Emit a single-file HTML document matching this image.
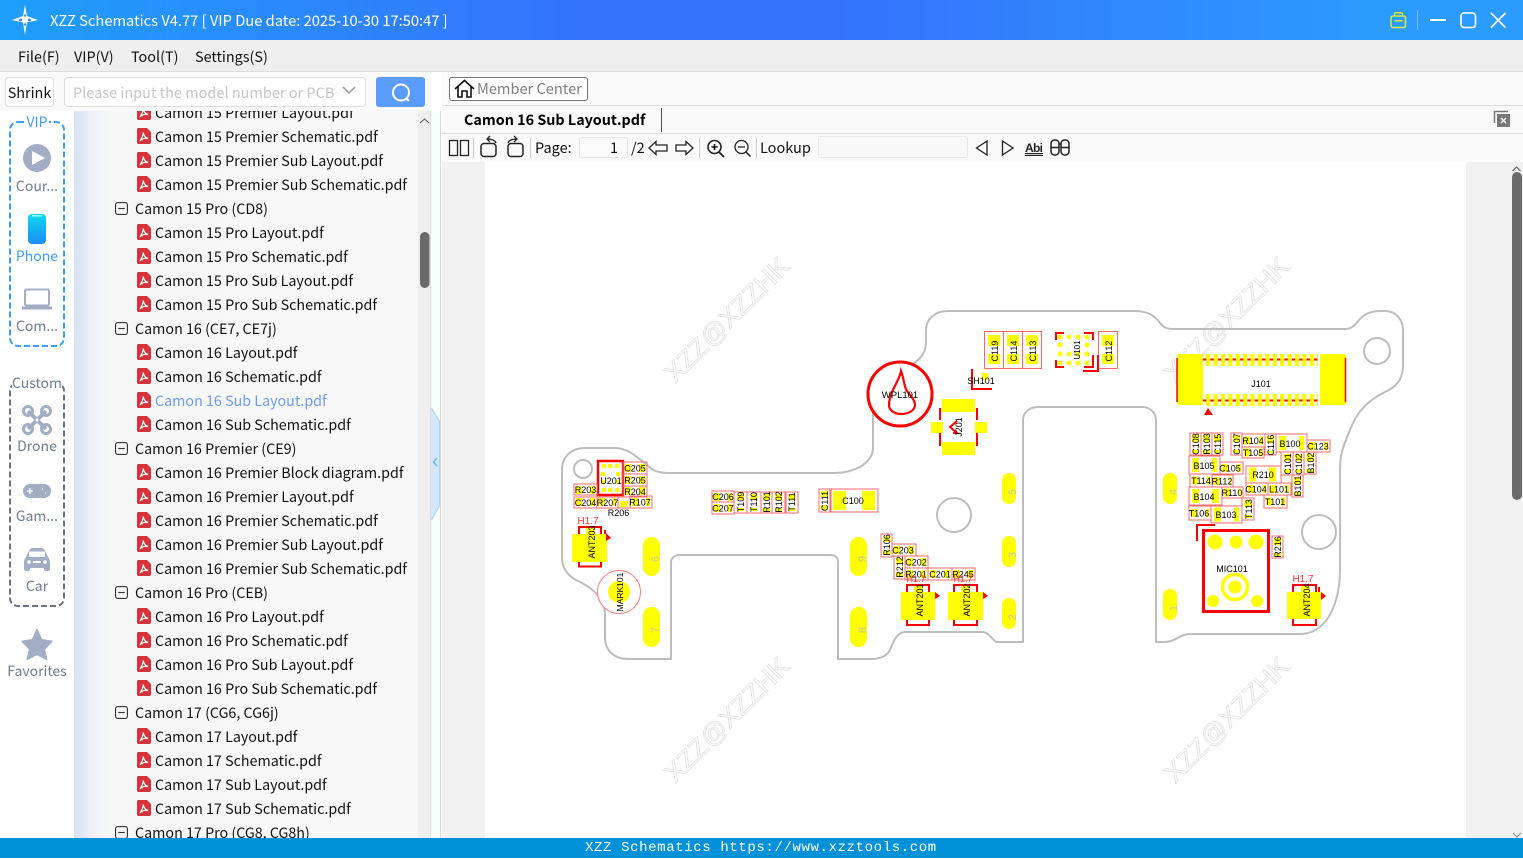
<!DOCTYPE html>
<html><head><meta charset="utf-8"><title>XZZ Schematics</title>
<style>
*{box-sizing:border-box}
html,body{margin:0;padding:0;width:1523px;height:858px;overflow:hidden;background:#fff;font-family:"Liberation Sans","Noto Sans CJK SC",sans-serif}
.n{font-family:"Noto Sans CJK SC","Liberation Sans",sans-serif}
.a{position:absolute}
#title{left:0;top:0;width:1523px;height:40px;background:linear-gradient(90deg,#1f9ffb 0%,#3573fb 38%,#3573fb 55%,#2b9bff 90%)}
#ttext{left:50px;top:10px;color:#fff;font-size:14.7px;line-height:22px;white-space:nowrap}
#menu{left:0;top:40px;width:1523px;height:32px;background:#efefef;border-bottom:1px solid #dcdcdc;font-size:14.4px;line-height:33px;color:#111}
#menu span{position:absolute;top:0}
#row{left:0;top:72px;width:431px;height:39px;background:#fafafa}
#shrink{left:5px;top:77px;width:49px;height:30px;background:#fff;border:1px solid #ddd;border-radius:4px;font-size:14.4px;line-height:30px;text-align:center;color:#111}
#inp{left:64px;top:77px;width:302px;height:30px;background:#fff;border:1px solid #ddd;border-radius:4px;color:#c4c6cc;font-size:14.5px;line-height:29px;padding-left:8px;white-space:nowrap}
#sb{left:376px;top:77px;width:49px;height:30px;background:#5a9cff;border-radius:3px}
#side{left:0;top:111px;width:74px;height:727px;background:#fff}
#tree{left:74px;top:111px;width:344px;height:727px;overflow:hidden;background:linear-gradient(90deg,#d9e3f3 0,#f2f4f7 24px,#f7f7f7 40px,#f8f8f8 100%)}
#sc1{left:418px;top:111px;width:12px;height:727px;background:#efefef}
.r{position:absolute;white-space:nowrap;font-size:14.3px;line-height:24px;height:24px;color:#111;left:81px;margin-top:1px}
.f{left:61px}
.r svg{position:absolute;left:-18px;top:3px}
.f svg{left:-20px;top:5px;width:13px;height:13px}
.s{position:absolute;left:0;width:74px;text-align:center;font-size:14px;line-height:20px;color:#6f7d92;white-space:nowrap}
#rtop{left:442px;top:72px;width:1081px;height:90px;background:#fafafa}
#main{left:442px;top:162px;width:1068px;height:676px;background:#f1f1f1}
#page{left:485px;top:162px;width:981px;height:676px;background:#fff}
#sc2{left:1510px;top:162px;width:13px;height:676px;background:#f1f1f1}
.hl{left:442px;width:1081px;height:1px;background:#dcdcdc}
.t{position:absolute;font-size:14.5px;line-height:20px;color:#111;white-space:nowrap}
.sep{position:absolute;top:138px;width:1px;height:20px;background:#ccc}
#status{left:0;top:838px;width:1523px;height:20px;background:#0091d8;color:#fff;font-family:"Liberation Mono",monospace;font-size:14px;line-height:21px}
#status span{position:absolute;left:585px;letter-spacing:.62px;white-space:nowrap}
svg text{font-family:"Liberation Sans",sans-serif}
.b{fill:none;stroke:#f86a6a;stroke-width:1}
.y{fill:none;stroke:#ff0}
.l{font-size:9px;text-anchor:middle;fill:#000}
.g{font-size:11px;text-anchor:middle;fill:#c8c8a0}
.p{fill:#ff0}
.o{fill:none;stroke:#bdbdbd;stroke-width:2}
.rd{fill:none;stroke:#f00;stroke-width:2}
.w{font-size:26.5px;fill:#fff;stroke:#e6e6e6;stroke-width:1;text-anchor:middle}
</style></head><body>
<svg width="0" height="0" style="position:absolute"><defs>
<symbol id="pdf" viewBox="0 0 14 16"><path d="M1.5 0H10L14 4V14.500A1.500 1.500 0 0 1 12.500 16H1.500A1.500 1.500 0 0 1 0 14.500V1.500A1.500 1.500 0 0 1 1.500 0Z" fill="#d5343f"/><path d="M6.200 4.500C7 8 8 9.500 11 10.500C8 9.800 5.500 10.500 3 12.800C5 10.500 6 8 6.200 4.500Z" fill="none" stroke="#fff" stroke-width="1.200"/></symbol>
<symbol id="min" viewBox="0 0 14 14"><rect x=".6" y=".6" width="12.800" height="12.800" rx="2.500" fill="none" stroke="#333" stroke-width="1.200"/><path d="M3.500 7H10.500" stroke="#333" stroke-width="1.200"/></symbol>
</defs></svg>

<div id="title" class="a"></div>
<svg class="a" style="left:0;top:0" width="1523" height="40">
<path d="M25 5L27 16 38 20 27 22.500 25 35 23 22.500 12 20 23 16Z" fill="#fff"/>
<circle cx="20.500" cy="20" r="1.500" fill="#3a8cf5"/><circle cx="29.500" cy="20" r="1.500" fill="#3a8cf5"/><circle cx="25" cy="15.500" r="1.200" fill="#3a8cf5"/><circle cx="25" cy="24.500" r="1.200" fill="#3a8cf5"/>
<rect x="1391" y="16" width="14.500" height="11.500" rx="2" fill="none" stroke="#d5e83c" stroke-width="1.500"/><path d="M1394.500 16V14A1.500 1.500 0 0 1 1396 12.800H1401A1.500 1.500 0 0 1 1402.500 14V16M1394.500 20.800H1402.500" fill="none" stroke="#d5e83c" stroke-width="1.500"/>
<path d="M1417.500 10V30" stroke="#7fc0ff" stroke-width="1"/>
<path d="M1430 20H1446" stroke="#fff" stroke-width="2"/>
<rect x="1461" y="13" width="14.500" height="14.500" rx="3" fill="none" stroke="#fff" stroke-width="1.600"/>
<path d="M1491 13L1505.500 27.500M1505.500 13L1491 27.500" stroke="#fff" stroke-width="1.600"/>
</svg>
<div id="ttext" class="a n">XZZ Schematics V4.77 [ VIP Due date: 2025-10-30 17:50:47 ]</div>

<div id="menu" class="a n"><span style="left:18px">File(F)</span><span style="left:74px">VIP(V)</span><span style="left:131px">Tool(T)</span><span style="left:195px">Settings(S)</span></div>

<div id="row" class="a"></div>
<div id="shrink" class="a n">Shrink</div>
<div id="inp" class="a n">Please input the model number or PCB</div>
<svg class="a" style="left:340px;top:84px" width="18" height="14"><path d="M3 3L9 9 15 3" fill="none" stroke="#999" stroke-width="1.500"/></svg>
<div id="sb" class="a"><svg width="49" height="30"><circle cx="25" cy="15.500" r="8" fill="none" stroke="#fff" stroke-width="2"/><path d="M30.500 21.500L33 24" stroke="#fff" stroke-width="2"/></svg></div>

<div id="side" class="a"></div>
<svg class="a" style="left:0;top:111px" width="74" height="600">
<rect x="10" y="11" width="54" height="224" rx="8" fill="none" stroke="#3d9dfb" stroke-width="2" stroke-dasharray="6 3"/>
<rect x="26" y="4" width="23" height="14" fill="#fff"/>
<circle cx="37" cy="47" r="14" fill="#a3aec4"/><path d="M32 40L45 47 32 54Z" fill="#fff"/>
<defs><linearGradient id="ph" x1="0" y1="0" x2="0" y2="1"><stop offset="0" stop-color="#10d8ee"/><stop offset="1" stop-color="#1a8cf5"/></linearGradient></defs>
<rect x="28" y="103" width="18" height="30" rx="4" fill="url(#ph)"/><rect x="32" y="104" width="10" height="1.500" fill="#9ff"/>
<rect x="25" y="178.500" width="24" height="16" rx="1.500" fill="none" stroke="#a3aec4" stroke-width="2"/><path d="M22 197H52" stroke="#a3aec4" stroke-width="3"/>
<rect x="10" y="272" width="54" height="223" rx="8" fill="none" stroke="#6c7386" stroke-width="2" stroke-dasharray="6 3"/>
<rect x="12" y="264" width="50" height="14" fill="#fff"/>
<g fill="none" stroke="#a3aec4"><path d="M28 300L46 318M46 300L28 318" stroke-width="4"/><circle cx="28" cy="300" r="4.500" stroke-width="3"/><circle cx="46" cy="300" r="4.500" stroke-width="3"/><circle cx="28" cy="318" r="4.500" stroke-width="3"/><circle cx="46" cy="318" r="4.500" stroke-width="3"/></g><circle cx="37" cy="309" r="2" fill="#fff" stroke="#a3aec4"/>
<rect x="23" y="373" width="28" height="14" rx="7" fill="#a3aec4"/><path d="M27 380H33M30 377V383M42 378H43M45 382H46" stroke="#fff" stroke-width="1.300"/>
<path d="M24 452C24 449 25 447 26 446L29 440C30 438 31 437 33 437H41C43 437 44 438 45 440L48 446C49 447 50 449 50 452V458C50 459 49 460 48 460H46C45 460 44 459 44 458V457H30V458C30 459 29 460 28 460H26C25 460 24 459 24 458Z" fill="#a3aec4"/><rect x="29" y="440.500" width="16" height="5.500" rx="1" fill="#fff"/><circle cx="29" cy="451" r="1.800" fill="#fff"/><circle cx="45" cy="451" r="1.800" fill="#fff"/><rect x="33" y="450" width="8" height="2" fill="#fff"/>
<path d="M37 519L41.500 529 51.500 530.500 44 538 46.500 548 37 543 27.500 548 30 538 22.500 530.500 32.500 529Z" fill="#a3aec4" stroke="#a3aec4" stroke-linejoin="round" stroke-width="2"/>
</svg>
<div class="s n" style="top:112px;color:#3d9dfb">VIP</div>
<div class="s n" style="top:176px">Cour...</div>
<div class="s n" style="top:246px;color:#3d9dfb">Phone</div>
<div class="s n" style="top:316px">Com...</div>
<div class="s n" style="top:373px">Custom</div>
<div class="s n" style="top:436px">Drone</div>
<div class="s n" style="top:506px">Gam...</div>
<div class="s n" style="top:576px">Car</div>
<div class="s n" style="top:661px">Favorites</div>

<div id="tree" class="a n">
<div class="r" style="top:-11px"><svg width="14" height="16"><use href="#pdf"/></svg>Camon 15 Premier Layout.pdf</div>
<div class="r" style="top:13px"><svg width="14" height="16"><use href="#pdf"/></svg>Camon 15 Premier Schematic.pdf</div>
<div class="r" style="top:37px"><svg width="14" height="16"><use href="#pdf"/></svg>Camon 15 Premier Sub Layout.pdf</div>
<div class="r" style="top:61px"><svg width="14" height="16"><use href="#pdf"/></svg>Camon 15 Premier Sub Schematic.pdf</div>
<div class="r f" style="top:85px"><svg width="14" height="14"><use href="#min"/></svg>Camon 15 Pro (CD8)</div>
<div class="r" style="top:109px"><svg width="14" height="16"><use href="#pdf"/></svg>Camon 15 Pro Layout.pdf</div>
<div class="r" style="top:133px"><svg width="14" height="16"><use href="#pdf"/></svg>Camon 15 Pro Schematic.pdf</div>
<div class="r" style="top:157px"><svg width="14" height="16"><use href="#pdf"/></svg>Camon 15 Pro Sub Layout.pdf</div>
<div class="r" style="top:181px"><svg width="14" height="16"><use href="#pdf"/></svg>Camon 15 Pro Sub Schematic.pdf</div>
<div class="r f" style="top:205px"><svg width="14" height="14"><use href="#min"/></svg>Camon 16 (CE7, CE7j)</div>
<div class="r" style="top:229px"><svg width="14" height="16"><use href="#pdf"/></svg>Camon 16 Layout.pdf</div>
<div class="r" style="top:253px"><svg width="14" height="16"><use href="#pdf"/></svg>Camon 16 Schematic.pdf</div>
<div class="r" style="top:277px;color:#6f9cf7"><svg width="14" height="16"><use href="#pdf"/></svg>Camon 16 Sub Layout.pdf</div>
<div class="r" style="top:301px"><svg width="14" height="16"><use href="#pdf"/></svg>Camon 16 Sub Schematic.pdf</div>
<div class="r f" style="top:325px"><svg width="14" height="14"><use href="#min"/></svg>Camon 16 Premier (CE9)</div>
<div class="r" style="top:349px"><svg width="14" height="16"><use href="#pdf"/></svg>Camon 16 Premier Block diagram.pdf</div>
<div class="r" style="top:373px"><svg width="14" height="16"><use href="#pdf"/></svg>Camon 16 Premier Layout.pdf</div>
<div class="r" style="top:397px"><svg width="14" height="16"><use href="#pdf"/></svg>Camon 16 Premier Schematic.pdf</div>
<div class="r" style="top:421px"><svg width="14" height="16"><use href="#pdf"/></svg>Camon 16 Premier Sub Layout.pdf</div>
<div class="r" style="top:445px"><svg width="14" height="16"><use href="#pdf"/></svg>Camon 16 Premier Sub Schematic.pdf</div>
<div class="r f" style="top:469px"><svg width="14" height="14"><use href="#min"/></svg>Camon 16 Pro (CEB)</div>
<div class="r" style="top:493px"><svg width="14" height="16"><use href="#pdf"/></svg>Camon 16 Pro Layout.pdf</div>
<div class="r" style="top:517px"><svg width="14" height="16"><use href="#pdf"/></svg>Camon 16 Pro Schematic.pdf</div>
<div class="r" style="top:541px"><svg width="14" height="16"><use href="#pdf"/></svg>Camon 16 Pro Sub Layout.pdf</div>
<div class="r" style="top:565px"><svg width="14" height="16"><use href="#pdf"/></svg>Camon 16 Pro Sub Schematic.pdf</div>
<div class="r f" style="top:589px"><svg width="14" height="14"><use href="#min"/></svg>Camon 17 (CG6, CG6j)</div>
<div class="r" style="top:613px"><svg width="14" height="16"><use href="#pdf"/></svg>Camon 17 Layout.pdf</div>
<div class="r" style="top:637px"><svg width="14" height="16"><use href="#pdf"/></svg>Camon 17 Schematic.pdf</div>
<div class="r" style="top:661px"><svg width="14" height="16"><use href="#pdf"/></svg>Camon 17 Sub Layout.pdf</div>
<div class="r" style="top:685px"><svg width="14" height="16"><use href="#pdf"/></svg>Camon 17 Sub Schematic.pdf</div>
<div class="r f" style="top:709px"><svg width="14" height="14"><use href="#min"/></svg>Camon 17 Pro (CG8, CG8h)</div>
</div>
<div id="sc1" class="a"></div>
<svg class="a" style="left:418px;top:111px" width="24" height="727">
<path d="M2 12L6.500 8 11 12" fill="none" stroke="#555"/>
<rect x="2" y="121" width="9.500" height="56" rx="4.700" fill="#6a6a6a"/>
<rect x="12" y="0" width="1" height="727" fill="#dcdcdc"/><rect x="13" y="0" width="9" height="727" fill="#fbfffb"/><rect x="22" y="0" width="1" height="727" fill="#dcdcdc"/>
<path d="M13 297L22 310V395L13 409Z" fill="#d3e7fc"/><path d="M13.500 297L21.500 310V395L13.500 409" fill="none" stroke="#a8d3fb"/>
<path d="M19 347L15.500 351 19 355" fill="none" stroke="#63b0f5" stroke-width="1.300"/>
</svg>

<div id="rtop" class="a"></div>
<div class="a hl" style="top:105px"></div>
<div class="a hl" style="top:133px"></div>
<div id="main" class="a"></div>
<div id="page" class="a"></div>
<div id="sc2" class="a"></div>

<div class="a n" style="left:449px;top:77px;width:139px;height:24px;border:1px solid #777;border-radius:3px;background:#fff"></div>
<svg class="a" style="left:449px;top:77px" width="30" height="24"><path d="M6 12L15.500 3.500 25 12M9 10V20H13V14H18V20H22V10" fill="none" stroke="#111" stroke-width="1.600"/></svg>
<div class="t n" style="left:477px;top:79px;color:#808080;font-size:14.6px">Member Center</div>
<div class="t n" style="left:464px;top:110px;font-weight:700;color:#000;font-size:14.35px">Camon 16 Sub Layout.pdf</div>
<div class="a" style="left:661px;top:108px;width:1px;height:24px;background:#555"></div>
<svg class="a" style="left:1493px;top:109px" width="20" height="20"><path d="M1.500 14V2.500H15" fill="none" stroke="#777" stroke-width="1.500"/><rect x="4" y="5" width="13" height="13" fill="#777"/><path d="M8 9L13 14M13 9L8 14" stroke="#fff" stroke-width="1.300"/></svg>

<svg class="a" style="left:442px;top:134px" width="640" height="28">
<g fill="none" stroke="#222" stroke-width="1.300">
<rect x="7.500" y="6.500" width="8" height="15"/><rect x="18.500" y="6.500" width="8" height="15"/>
<rect x="39" y="9.500" width="15" height="13" rx="3" stroke-width="1.500"/><path d="M54 9C53 6 50 5 45 5M48 2L45 5 48 8"/>
<rect x="66" y="9.500" width="15" height="13" rx="3" stroke-width="1.500"/><path d="M66 9C67 6 70 5 75 5M72 2L75 5 72 8"/>
<path d="M207 14L214 7.500V11H225V17H214V20.500Z"/><path d="M251 14L244 7.500V11H234V17H244V20.500Z"/>
<circle cx="272.500" cy="13" r="6.500" stroke-width="1.600"/><path d="M277 18L282 23" stroke-width="1.800"/>
<circle cx="299.500" cy="13" r="6.500"/><path d="M304 18L308.500 22.500" stroke-width="1.500"/><path d="M296 13H303"/>
<path d="M545 7L534.500 14 545 21Z"/><path d="M560.500 7L571 14 560.500 21Z"/>
</g>
<path d="M272.500 10V16M269.500 13H275.500" stroke="#111" stroke-width="1.600"/>
<g fill="none" stroke="#222" stroke-width="1.500"><rect x="609" y="6" width="8" height="15" rx="3.500"/><rect x="619" y="6" width="8" height="15" rx="3.500"/><path d="M609 13.500H617M619 13.500H627M617 10H619"/></g>
<text x="583" y="18" style="font-size:12px;text-decoration:underline;font-weight:700" fill="#222" textLength="18">Abi</text>
<path d="M583 21.500H601" stroke="#222"/>
</svg>
<div class="sep" style="left:473px"></div><div class="sep" style="left:530px"></div><div class="sep" style="left:699px"></div><div class="sep" style="left:756px"></div>
<div class="t n" style="left:535px;top:138px">Page:</div>
<div class="a n" style="left:579px;top:137px;width:49px;height:21px;background:#fbfbfb;border:1px solid #e6e6e6;border-radius:3px;font-size:14.5px;line-height:20px;text-align:right;padding-right:9px;color:#111">1</div>
<div class="t n" style="left:631px;top:138px">/2</div>
<div class="t n" style="left:760px;top:138px">Lookup</div>
<div class="a" style="left:818px;top:136px;width:150px;height:22px;background:#f8f8f8;border:1px solid #e6e6e6;border-radius:3px"></div>

<svg class="a" style="left:485px;top:162px" width="1038" height="676">
<g transform="translate(-485 -162)">
<g class="w">
<text class="w" transform="rotate(-45 733 326)" x="733" y="326">XZZ@XZZHK</text>
<text class="w" transform="rotate(-45 1233 326)" x="1233" y="326">XZZ@XZZHK</text>
<text class="w" transform="rotate(-45 733 726)" x="733" y="726">XZZ@XZZHK</text>
<text class="w" transform="rotate(-45 1233 726)" x="1233" y="726">XZZ@XZZHK</text>
</g>
<path class="o" d="M562 470C562 456 572 448 585 448H615C630 448 640 460 653 470C660 473 665 473 670 473H835C845 473 852 471 860 467C868 462 873 456 873 448V400C873 385 885 375 905 368C918 362 926 355 926 342V331C926 318 936 311 948 311H1135C1148 311 1155 316 1160 323C1164 328 1168 329 1173 329H1345C1352 329 1355 325 1359 320C1365 313 1372 311 1380 311H1385C1396 311 1403 320 1403 330V365C1403 378 1398 386 1385 392C1365 402 1356 414 1350 430C1344 445 1340 452 1340 470V570C1340 590 1335 610 1325 622C1318 630 1310 634 1300 634H1190C1180 634 1175 642 1165 642H1156V420C1156 412 1149 407 1142 407H1038C1030 407 1023 412 1023 420V642H997C993 642 990 632 982 632H905C897 632 893 642 890 650C887 656 880 659 872 659H838V562C838 558 836 555 830 555H680C675 555 671 558 671 562V659H628C614 659 605 650 605 638V615C605 600 595 590 582 583C570 578 562 570 562 558Z"/>
<circle class="o" cx="583" cy="469" r="9"/><circle class="o" cx="954" cy="515" r="17"/><circle class="o" cx="1319" cy="532" r="17"/><circle class="o" cx="1377" cy="351" r="13"/>

<!-- oblong pads -->
<rect class="p" x="643" y="537" width="17" height="39" rx="8.500"/><rect class="p" x="643" y="607" width="17" height="40" rx="8.500"/>
<rect class="p" x="850" y="537" width="17" height="39" rx="8.500"/><rect class="p" x="850" y="607" width="17" height="40" rx="8.500"/>
<rect class="p" x="1002" y="473" width="14" height="31" rx="7"/><rect class="p" x="1002" y="536" width="14" height="31" rx="7"/><rect class="p" x="1002" y="598" width="14" height="31" rx="7"/>
<rect class="p" x="1163" y="473" width="14" height="31" rx="7"/><rect class="p" x="1163" y="589" width="14" height="31" rx="7"/>
<text class="g" transform="rotate(-90 655 556)" x="652" y="560">6</text><text class="g" transform="rotate(-90 655 627)" x="652" y="631">7</text>
<text class="g" transform="rotate(-90 862 556)" x="859" y="560">9</text><text class="g" transform="rotate(-90 862 627)" x="859" y="631">8</text>
<text class="g" transform="rotate(-90 1012 489)" x="1009" y="493">5</text><text class="g" transform="rotate(-90 1012 552)" x="1009" y="556">3</text><text class="g" transform="rotate(-90 1012 614)" x="1009" y="618">2</text>
<text class="g" transform="rotate(-90 1173 489)" x="1170" y="493">4</text><text class="g" transform="rotate(-90 1173 605)" x="1170" y="609">1</text>

<!-- U201 cluster -->
<rect x="598" y="461" width="25" height="34" fill="#fff" stroke="#f00" stroke-width="2.500"/>
<g class="p"><rect x="602" y="464" width="4" height="4"/><rect x="608" y="464" width="4" height="4"/><rect x="615" y="464" width="4" height="4"/><rect x="602" y="488" width="4" height="4"/><rect x="608" y="488" width="4" height="4"/><rect x="615" y="488" width="4" height="4"/><rect x="601" y="472" width="4" height="4"/><rect x="616" y="472" width="4" height="4"/><rect x="601" y="480" width="4" height="4"/><rect x="616" y="480" width="4" height="4"/></g>
<text class="l" x="611" y="484">U201</text>
<path class="y" stroke-width="8" stroke-dasharray="6 8" d="M625 468H645M625 480H645M625 491H645M576 490H595M576 502H595M599 502H616M632 502H650M714 497H732M714 508H732M894 550H914M907 562H926M907 574H926M930 574H950M954 574H973"/>
<path class="y" stroke-width="7" stroke-dasharray="6 8" d="M740.500 494V511M754 494V511M766.500 494V511M778.500 494V511M792 494V511M824.500 491V510M887 536V555M899.500 558V577"/>
<rect x="620" y="501" width="8" height="6" fill="#ff0"/>
<rect class="b" x="623" y="462" width="24" height="12"/><text class="l" x="635" y="471.500">C205</text>
<rect class="b" x="623" y="474" width="24" height="12"/><text class="l" x="635" y="483.500">R205</text>
<rect class="b" x="623" y="486" width="24" height="11"/><text class="l" x="635" y="495">R204</text>
<rect class="b" x="574" y="484" width="23" height="11"/><text class="l" x="585.500" y="493">R203</text>
<rect class="b" x="574" y="497" width="23" height="11"/><text class="l" x="585.500" y="506">C204</text>
<rect class="b" x="597" y="497" width="21" height="11"/><text class="l" x="607.500" y="506">R207</text>
<rect class="b" x="618" y="497" width="12" height="11"/>
<rect class="b" x="630" y="496" width="22" height="12"/><text class="l" x="640" y="505.500">R107</text>
<text class="l" x="618.500" y="516">R206</text>
<text class="l" x="588" y="524" style="fill:#f33;font-size:10px">H1.7</text>

<!-- ANT203 -->
<rect class="p" x="572" y="534" width="35" height="28"/><rect class="p" x="586" y="527" width="9" height="8"/>
<path class="rd" d="M579 534V527H601V534M579 562V566.500H601V562"/><path d="M606 533L611 538 606 541Z" fill="#f00"/><path d="M605 530V534" stroke="#f00" stroke-width="2"/>
<text class="l" transform="rotate(-90 592 542)" x="592" y="545">ANT203</text>

<!-- MARK -->
<circle cx="619" cy="592" r="21.500" fill="#fff" stroke="#f77"/><circle class="p" cx="619" cy="592" r="11"/>
<text class="l" transform="rotate(-90 620 592)" x="620" y="595" style="font-size:8.500px">MARK101</text>

<!-- middle row -->
<rect class="b" x="712" y="491" width="22" height="11"/><text class="l" x="723" y="500">C206</text>
<rect class="b" x="712" y="502" width="22" height="12"/><text class="l" x="723" y="511.500">C207</text>
<rect class="b" x="734" y="492" width="13" height="21"/><text class="l" transform="rotate(-90 741 502)" x="741" y="505">T109</text>
<rect class="b" x="747" y="492" width="14" height="21"/><text class="l" transform="rotate(-90 754 502)" x="754" y="505">T110</text>
<rect class="b" x="761" y="492" width="11" height="21"/><text class="l" transform="rotate(-90 767 502)" x="767" y="505">R101</text>
<rect class="b" x="772" y="492" width="13" height="21"/><text class="l" transform="rotate(-90 779 502)" x="779" y="505">R102</text>
<rect class="b" x="786" y="492" width="12" height="21"/><text class="l" transform="rotate(-90 792 502)" x="792" y="505">T111</text>
<rect class="b" x="819" y="489" width="11" height="23"/><text class="l" transform="rotate(-90 825 501)" x="825" y="504">C111</text>
<rect class="p" x="833" y="491" width="13" height="19"/><rect class="p" x="862" y="491" width="13" height="19"/>
<rect class="b" x="831" y="489" width="47" height="23"/><text class="l" x="853" y="504">C100</text>

<!-- lower cluster -->
<rect class="b" x="881" y="534" width="11" height="23"/><text class="l" transform="rotate(-90 887 545)" x="887" y="548">R106</text>
<rect class="b" x="892" y="544" width="24" height="12"/><text class="l" x="903" y="553.500">C203</text>
<rect class="b" x="894" y="556" width="11" height="23"/><text class="l" transform="rotate(-90 900 567)" x="900" y="570">R212</text>
<rect class="b" x="905" y="556" width="23" height="12"/><text class="l" x="916" y="565.500">C202</text>
<rect class="b" x="905" y="568" width="23" height="12"/><text class="l" x="916" y="577.500">R201</text>
<rect class="b" x="928" y="568" width="24" height="12"/><text class="l" x="940" y="577.500">C201</text>
<rect class="b" x="952" y="568" width="23" height="12"/><text class="l" x="963" y="577.500">R245</text>
<rect class="p" x="901" y="592" width="34" height="28"/><rect class="p" x="914" y="585" width="9" height="8"/>
<path class="rd" d="M907 592V585H929V592M907 620V625H929V620"/><path d="M935 592L940 596 935 599Z" fill="#f00"/>
<text class="l" transform="rotate(-90 920 600)" x="920" y="603">ANT201</text>
<rect class="p" x="948" y="592" width="35" height="28"/><rect class="p" x="961" y="585" width="9" height="8"/>
<path class="rd" d="M954 592V585H977V592M954 620V625H977V620"/><path d="M983 592L988 596 983 599Z" fill="#f00"/>
<text class="l" transform="rotate(-90 967 600)" x="967" y="603">ANT202</text>

<!-- top caps -->
<g class="p"><rect x="988" y="335" width="12" height="11"/><rect x="988" y="354" width="12" height="10"/><rect x="1007" y="335" width="12" height="11"/><rect x="1007" y="354" width="12" height="10"/><rect x="1026" y="335" width="12" height="11"/><rect x="1026" y="354" width="12" height="10"/><rect x="1102" y="335" width="12" height="11"/><rect x="1102" y="354" width="12" height="10"/></g>
<rect class="b" x="984.500" y="331.500" width="19" height="37"/><rect class="b" x="1003.500" y="331.500" width="19" height="37"/><rect class="b" x="1022.500" y="331.500" width="19" height="37"/><rect class="b" x="1098.500" y="331.500" width="19" height="37"/>
<text class="l" transform="rotate(-90 995 351)" x="995" y="354">C119</text><text class="l" transform="rotate(-90 1014 351)" x="1014" y="354">C114</text><text class="l" transform="rotate(-90 1033 351)" x="1033" y="354">C113</text><text class="l" transform="rotate(-90 1109 351)" x="1109" y="354">C112</text>
<g class="p"><circle cx="1060" cy="337" r="2.500"/><circle cx="1069" cy="337" r="2.500"/><circle cx="1078" cy="337" r="2.500"/><circle cx="1087" cy="337" r="2.500"/><circle cx="1060" cy="345" r="2.500"/><circle cx="1087" cy="345" r="2.500"/><circle cx="1060" cy="354" r="2.500"/><circle cx="1087" cy="354" r="2.500"/><circle cx="1060" cy="363" r="2.500"/><circle cx="1069" cy="363" r="2.500"/><circle cx="1078" cy="363" r="2.500"/><circle cx="1087" cy="363" r="2.500"/><circle cx="1069" cy="354" r="2.500"/><circle cx="1078" cy="354" r="2.500"/></g>
<path class="rd" stroke-width="2.500" d="M1056 340V333H1064M1084 333H1093V340M1056 360V367H1064M1084 367H1093V355M1098 355V371H1083"/>
<text class="l" transform="rotate(-90 1077 350)" x="1077" y="353" style="font-size:8px">U101</text>
<path class="rd" d="M972 369V389H992"/><rect class="p" x="982" y="373" width="6" height="7"/><text class="l" x="981" y="384">SH101</text>

<!-- WPL -->
<circle cx="900" cy="394" r="32" fill="#fff" stroke="#f00" stroke-width="3"/>
<path d="M901 371C900 380 889 392 889 405C889 410 894 414 901 414C909 414 915 410 915 405C915 400 910 395 907 391C904 387 904 378 901 371Z" fill="none" stroke="#f00" stroke-width="2.200"/>
<text class="l" x="900" y="398" style="font-size:9.500px">WPL101</text>

<!-- J201 -->
<g class="p"><rect x="942" y="399" width="33" height="13"/><rect x="942" y="442" width="33" height="13"/><rect x="931" y="422" width="12" height="11"/><rect x="975" y="422" width="12" height="11"/></g>
<path class="rd" d="M940 408V420M940 433V446M977 408V420M977 433V446M957 421L950 427 957 433H953"/>
<text class="l" transform="rotate(-90 959 427)" x="959" y="430">J201</text>

<!-- J101 -->
<path class="y" stroke-width="12" stroke-dasharray="4.200 3.200" d="M1206 360H1318M1206 400H1318"/>
<path fill="none" stroke="#f00" stroke-width="2" stroke-dasharray="3.300 4.100" d="M1203 359.500H1320M1203 400.500H1320"/>
<rect class="p" x="1177" y="354" width="26" height="51" rx="2"/><rect class="p" x="1320" y="354" width="26" height="51" rx="2"/>
<path d="M1177 358V402M1345.500 358V402" stroke="#f00" stroke-width="1.500"/>
<path d="M1208 408L1213 415H1204Z" fill="#f00"/>
<text class="l" x="1261" y="387">J101</text>

<!-- right cluster -->
<path class="y" stroke-width="7" stroke-dasharray="7 8" d="M1195.500 435V453M1206.500 435V453M1217.500 435V453M1236.500 435V453M1270.500 436V453M1287 454V473M1299 454V473M1310 454V473M1297.500 477V495M1248 500V518"/>
<path class="y" stroke-width="8" stroke-dasharray="6 9" d="M1244 440.500H1263M1244 452.500H1262M1222 468H1241M1309 446H1328M1192 480.500H1210M1214 481H1231M1248 489H1266M1270 489H1289M1224 492.500H1241M1266 501.500H1285M1191 513H1209"/>
<path class="y" stroke-width="14" stroke-dasharray="7 13" d="M1279 443H1304M1192 465H1217M1249 474.500H1278M1192 496H1219M1214 514.500H1239"/>
<rect class="b" x="1190" y="433" width="11" height="22"/><text class="l" transform="rotate(-90 1196 444)" x="1196" y="447">C108</text>
<rect class="b" x="1201" y="433" width="11" height="22"/><text class="l" transform="rotate(-90 1207 444)" x="1207" y="447">R103</text>
<rect class="b" x="1212" y="433" width="11" height="22"/><text class="l" transform="rotate(-90 1218 444)" x="1218" y="447">C115</text>
<rect class="b" x="1231" y="433" width="11" height="22"/><text class="l" transform="rotate(-90 1237 444)" x="1237" y="447">C107</text>
<rect class="b" x="1242" y="434" width="23" height="13"/><text class="l" x="1253" y="444">R104</text>
<rect class="b" x="1242" y="447" width="22" height="11"/><text class="l" x="1253" y="456">T105</text>
<rect class="b" x="1265" y="434" width="11" height="21"/><text class="l" transform="rotate(-90 1271 445)" x="1271" y="448">C116</text>
<rect class="b" x="1276" y="434" width="31" height="18"/><text class="l" x="1290" y="447">B100</text>
<rect class="b" x="1307" y="440" width="23" height="12"/><text class="l" x="1318" y="449.500">C123</text>
<rect class="b" x="1281" y="452" width="12" height="23"/><text class="l" transform="rotate(-90 1288 464)" x="1288" y="467">C101</text>
<rect class="b" x="1293" y="452" width="11" height="23"/><text class="l" transform="rotate(-90 1299 464)" x="1299" y="467">C102</text>
<rect class="b" x="1304" y="452" width="12" height="22"/><text class="l" transform="rotate(-90 1311 463)" x="1311" y="466">B102</text>
<rect class="b" x="1292" y="475" width="11" height="22"/><text class="l" transform="rotate(-90 1298 486)" x="1298" y="489">B101</text>
<rect class="b" x="1189" y="456" width="31" height="18"/><text class="l" x="1204" y="469">B105</text>
<rect class="b" x="1220" y="462" width="23" height="12"/><text class="l" x="1230" y="471.500">C105</text>
<rect class="b" x="1246" y="466" width="35" height="17"/><text class="l" x="1263" y="478">R210</text>
<rect class="b" x="1190" y="474" width="22" height="13"/><text class="l" x="1201" y="484">T114</text>
<rect class="b" x="1212" y="475" width="21" height="12"/><text class="l" x="1222" y="484.500">R112</text>
<rect class="b" x="1246" y="483" width="22" height="12"/><text class="l" x="1256" y="492.500">C104</text>
<rect class="b" x="1268" y="483" width="23" height="12"/><text class="l" x="1279" y="492.500">L101</text>
<rect class="b" x="1189" y="487" width="33" height="18"/><text class="l" x="1204" y="500">B104</text>
<rect class="b" x="1222" y="487" width="21" height="11"/><text class="l" x="1232" y="496">R110</text>
<rect class="b" x="1264" y="495" width="23" height="13"/><text class="l" x="1275" y="505">T101</text>
<rect class="b" x="1242" y="498" width="12" height="22"/><text class="l" transform="rotate(-90 1249 509)" x="1249" y="512">T113</text>
<rect class="b" x="1189" y="506" width="22" height="14"/><text class="l" x="1199" y="516.500">T106</text>
<rect class="b" x="1211" y="506" width="31" height="17"/><text class="l" x="1226" y="518">B103</text>
<path class="rd" d="M1197 541V525H1215" stroke-width="2.500"/>
<rect x="1203.500" y="530.500" width="65" height="81" fill="#fff" stroke="#f00" stroke-width="3"/>
<g class="p"><circle cx="1215" cy="542" r="7.500"/><circle cx="1236" cy="542" r="6.500"/><circle cx="1256" cy="542" r="7.500"/><circle cx="1213" cy="601" r="6"/><circle cx="1257" cy="601" r="6"/><circle cx="1235" cy="587" r="6.500"/></g>
<circle cx="1235" cy="587" r="12.500" fill="none" stroke="#ff0" stroke-width="3.500"/>
<text class="l" x="1232" y="572">MIC101</text>
<path class="y" stroke-width="7" stroke-dasharray="7 8" d="M1277.500 538V556"/>
<rect class="b" x="1272" y="536" width="11" height="22"/><text class="l" transform="rotate(-90 1278 547)" x="1278" y="550">R216</text>
<text class="l" x="1303" y="582" style="fill:#f33;font-size:10px">H1.7</text>
<rect class="p" x="1287" y="592" width="34" height="27"/><rect class="p" x="1301" y="585" width="9" height="8"/>
<path class="rd" d="M1293 592V585H1316V592M1293 619V625H1316V619"/><path d="M1321 592L1326 596 1321 600Z" fill="#f00"/><path d="M1319 587V592" stroke="#f00" stroke-width="2"/>
<text class="l" transform="rotate(-90 1307 600)" x="1307" y="603">ANT204</text>
<text x="916" y="582" class="l" style="fill:#f33;font-size:9px">H1.7</text><text x="963" y="582" class="l" style="fill:#f33;font-size:9px">H1.7</text>

<!-- right scrollbar -->
<path d="M1512.500 171L1516.500 167 1520.500 171" fill="none" stroke="#555"/>
<rect x="1512" y="172" width="10" height="328" rx="5" fill="#6a6a6a"/>
<path d="M1513 833L1517 837 1521 833" fill="none" stroke="#888"/>
</g></svg>

<div id="status" class="a"><span>XZZ Schematics https://www.xzztools.com</span></div>
</body></html>
